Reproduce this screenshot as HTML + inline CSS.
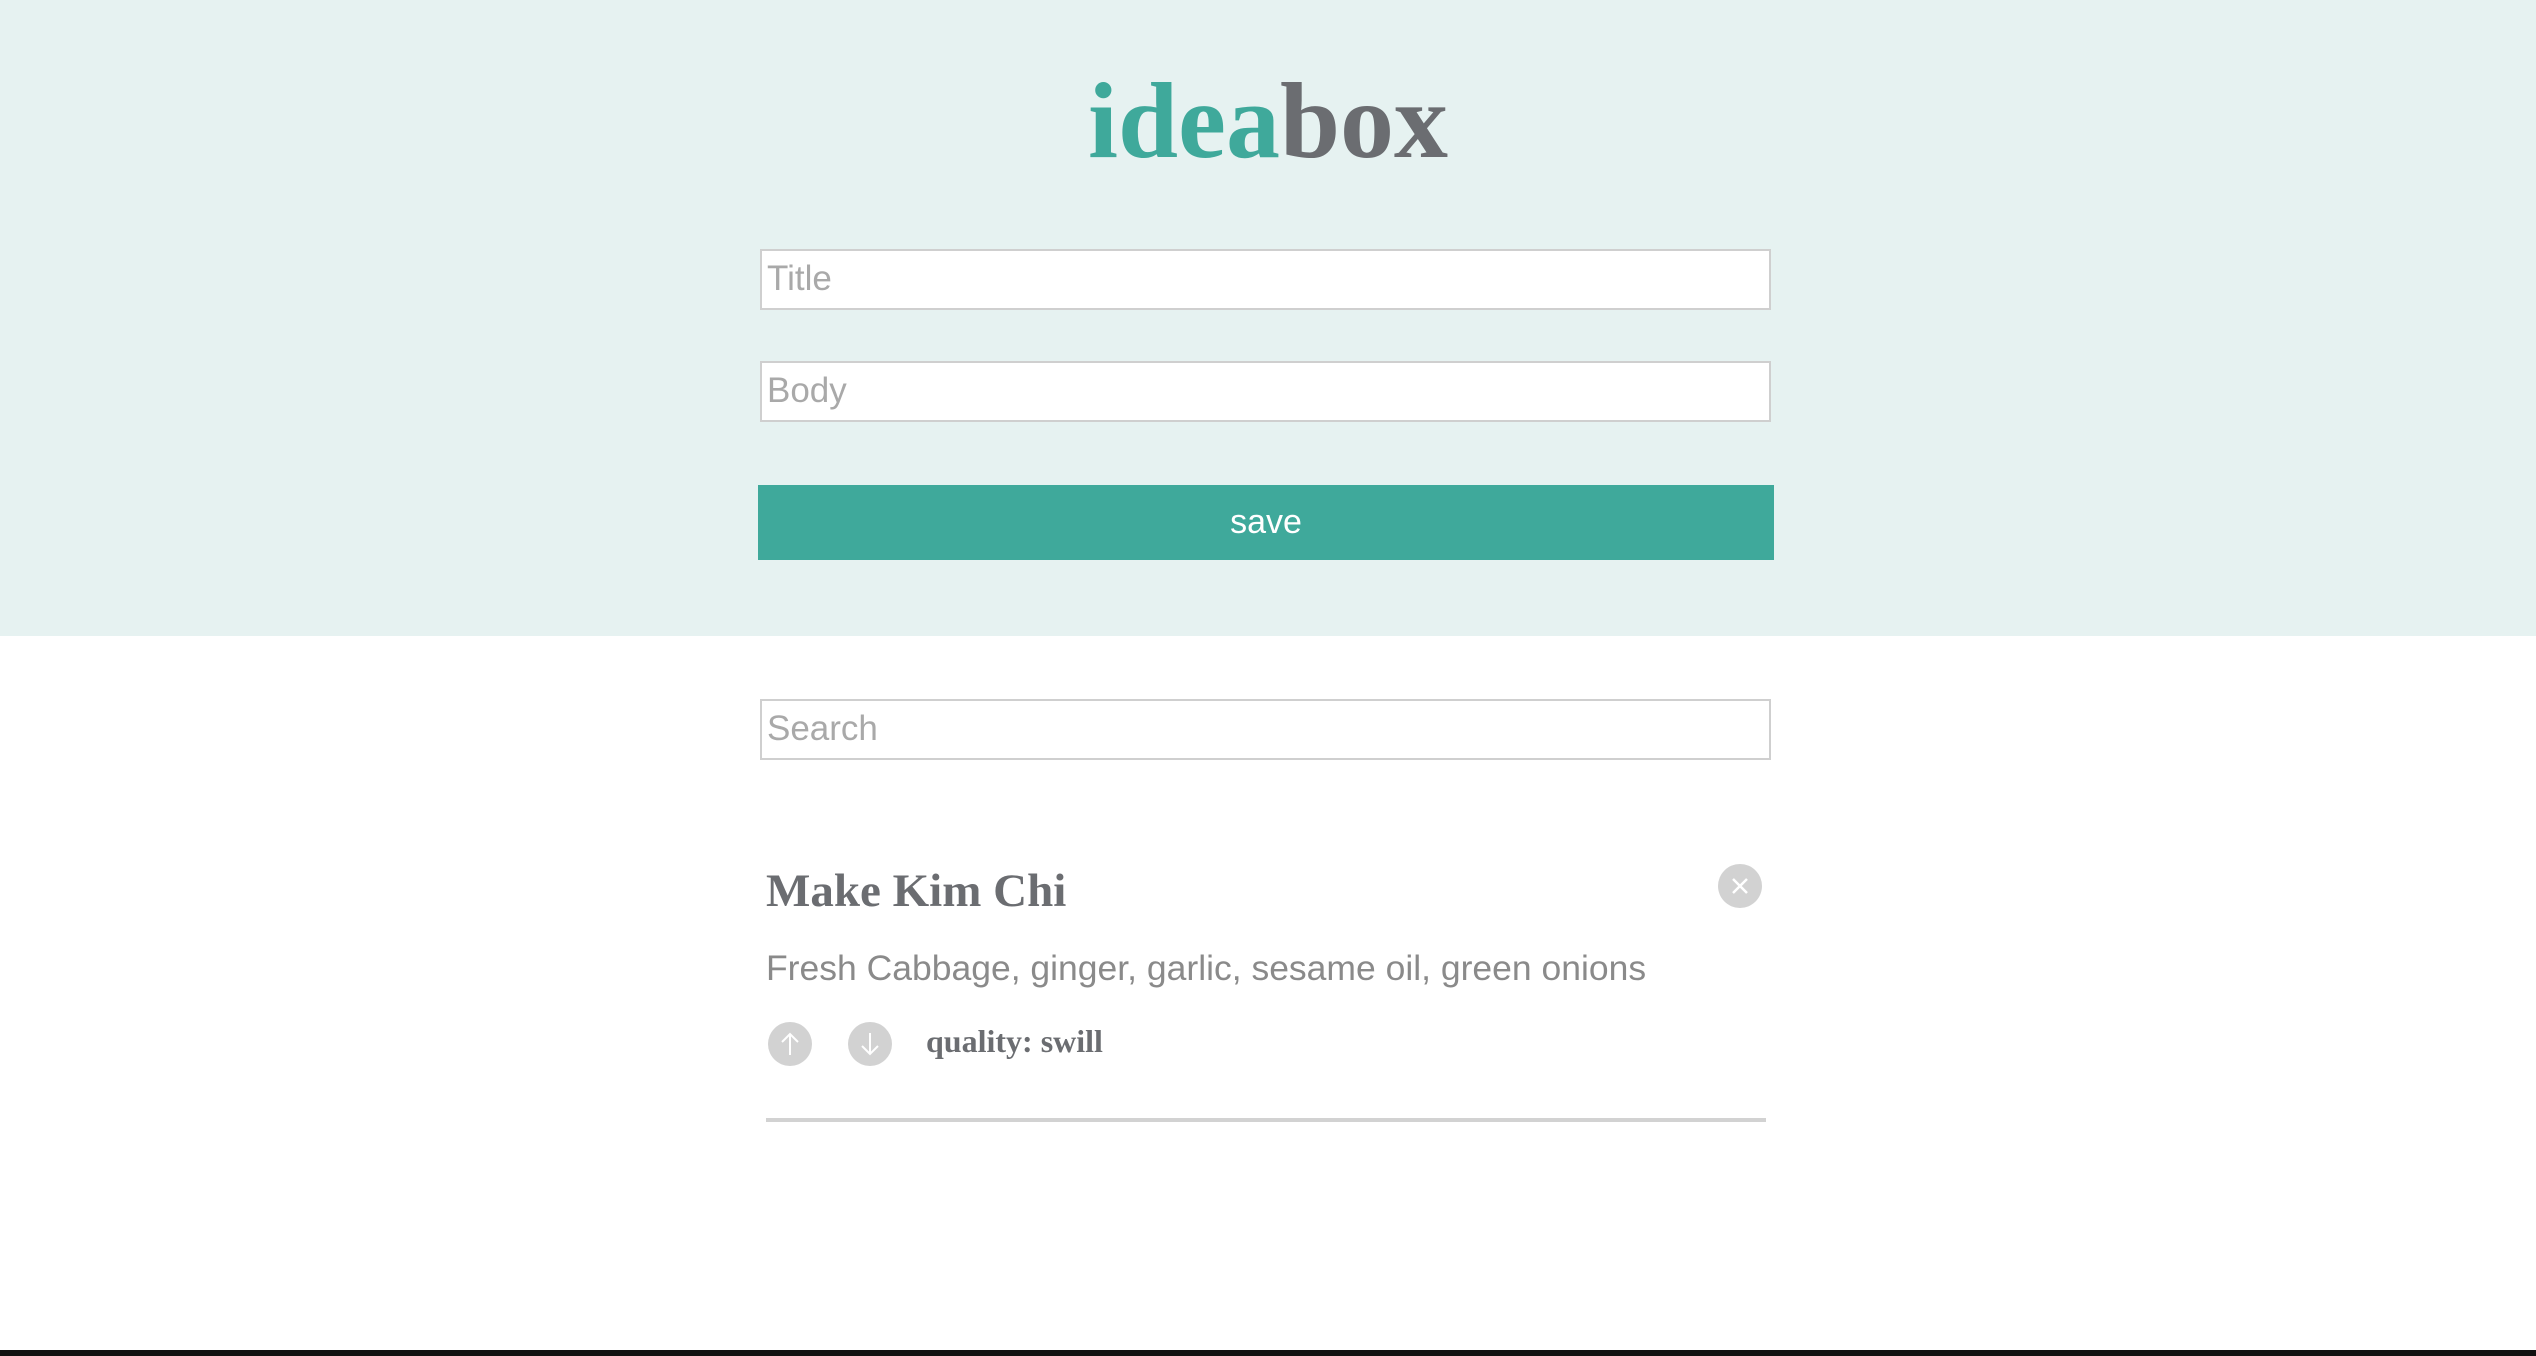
<!DOCTYPE html>
<html><head><meta charset="utf-8"><style>
*{margin:0;padding:0;box-sizing:border-box}
body{width:2536px;height:1356px;background:#fff;position:relative;overflow:hidden;font-family:"Liberation Sans",sans-serif}
.hdr{position:absolute;left:0;top:0;width:2536px;height:636px;background:#e6f2f1}
.logo{position:absolute;left:0;width:2536px;top:60px;text-align:center;font-family:"Liberation Serif",serif;font-weight:bold;font-size:108px;letter-spacing:0px;color:#6b6d71}
.logo span{color:#3fa99b}
.inp{position:absolute;left:760px;width:1011px;height:61px;background:#fff;border:2px solid #cfcfcf;color:#a9a9a9;font-size:35px;padding-left:5px;line-height:56px}
.btn{position:absolute;left:758px;top:485px;width:1016px;height:75px;background:#3fa99b;color:#fff;text-align:center;font-size:34px;line-height:74px}
.circ{position:absolute;border-radius:50%;background:#d2d2d2}
.bar{position:absolute;left:0;top:1350px;width:2536px;height:6px;background:#111}
</style></head><body>
<div class="hdr"></div>
<div class="logo"><span>idea</span>box</div>
<div class="inp" style="top:249px">Title</div>
<div class="inp" style="top:361px">Body</div>
<div class="btn">save</div>
<div class="inp" style="top:699px">Search</div>
<div style="position:absolute;left:766px;top:864px;font-family:'Liberation Serif',serif;font-weight:bold;font-size:47px;color:#6b6d71">Make Kim Chi</div>
<div class="circ" style="left:1718px;top:864px;width:44px;height:44px"></div>
<svg style="position:absolute;left:1718px;top:864px" width="44" height="44"><path d="M15 15L29 29M29 15L15 29" stroke="#fff" stroke-width="2.5"/></svg>
<div style="position:absolute;left:766px;top:948px;font-size:35.5px;color:#8a8a8a">Fresh Cabbage, ginger, garlic, sesame oil, green onions</div>
<div class="circ" style="left:768px;top:1022px;width:44px;height:44px"></div>
<svg style="position:absolute;left:768px;top:1022px" width="44" height="44"><path d="M22 33V12M14 20L22 12L30 20" stroke="#fff" stroke-width="2" fill="none"/></svg>
<div class="circ" style="left:848px;top:1022px;width:44px;height:44px"></div>
<svg style="position:absolute;left:848px;top:1022px" width="44" height="44"><path d="M22 11V32M14 24L22 32L30 24" stroke="#fff" stroke-width="2" fill="none"/></svg>
<div style="position:absolute;left:926px;top:1023px;font-family:'Liberation Serif',serif;font-weight:bold;font-size:32px;color:#6b6d71">quality: swill</div>
<div style="position:absolute;left:766px;top:1118px;width:1000px;height:4px;background:#d2d2d2"></div>
<div class="bar"></div>
</body></html>
